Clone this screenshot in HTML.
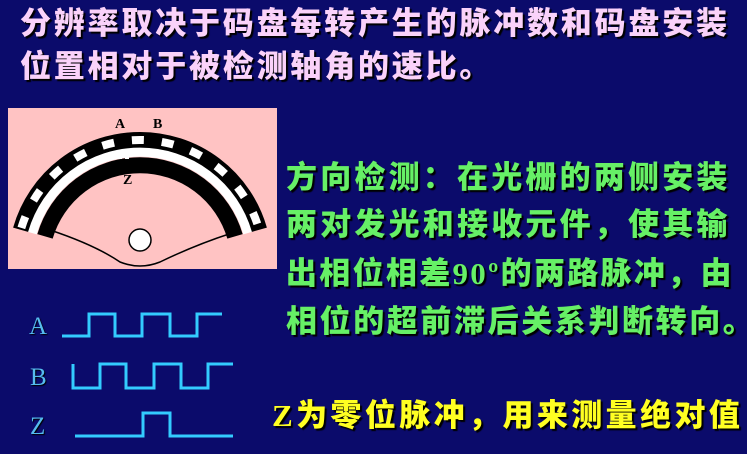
<!DOCTYPE html>
<html><head><meta charset="utf-8"><style>
html,body{margin:0;padding:0}
body{width:747px;height:454px;background:#0b0b6b;position:relative;overflow:hidden;font-family:"Liberation Sans","Noto Sans CJK SC",sans-serif}
.t{position:absolute;white-space:nowrap;font-weight:900;text-shadow:2px 2px 1px #000;line-height:1}
.ti{color:#fad2fa;font-size:31px;letter-spacing:2.8px;left:20px}
.g{color:#66f066;font-size:31px;letter-spacing:3.2px;left:286px}
.y{color:#ffff22;font-size:31px;letter-spacing:3.4px;left:272px}
.s{font-family:"Liberation Serif",serif;font-weight:bold}
.l{position:absolute;font-family:"Liberation Serif",serif;color:#55bbee;font-size:25px;line-height:1;text-shadow:1px 1px 1px #000}
</style></head><body>
<div class="t ti" style="top:8px">分辨率取决于码盘每转产生的脉冲数和码盘安装</div>
<div class="t ti" style="top:51px">位置相对于被检测轴角的速比。</div>

<svg style="position:absolute;left:0;top:0" width="747" height="454">
<rect x="8" y="108" width="269" height="161" fill="#ffc3c3"/>
<path d="M20.8,229.8 A124,124 0 0 1 259.2,229.8" fill="none" stroke="#000" stroke-width="16"/>
<path d="M20.8,229.8 A124,124 0 0 1 259.2,229.8" fill="none" stroke="#fff" stroke-width="8" stroke-dasharray="12 18" stroke-dashoffset="-2"/>
<path d="M32.4,233.1 A112,112 0 0 1 247.6,233.1" fill="none" stroke="#fff" stroke-width="9"/>
<path d="M45,236.4 A99,99 0 0 1 235,236.4" fill="none" stroke="#000" stroke-width="16"/>
<rect x="118" y="155" width="4" height="4" fill="#fff"/><rect x="125" y="155" width="4" height="4" fill="#fff"/>
<path d="M50,230 Q95,245 120,262 Q140,270 160,262 Q195,245 232,233" fill="none" stroke="#000" stroke-width="1.5"/>
<circle cx="140" cy="240" r="11" fill="#fff" stroke="#000" stroke-width="1.5"/>
<text x="115" y="128" font-family="Liberation Serif" font-weight="bold" font-size="14" fill="#000">A</text>
<text x="153" y="128" font-family="Liberation Serif" font-weight="bold" font-size="14" fill="#000">B</text>
<text x="123" y="184" font-family="Liberation Serif" font-weight="bold" font-size="14" fill="#000">Z</text>
<g fill="none" stroke="#33ccff" stroke-width="3">
<path d="M62,336 H89 V314 H115 V336 H142 V314 H170 V336 H197 V314 H222"/>
<path d="M73,364 V388 H100 V364 H126 V388 H154 V364 H181 V388 H208 V364 H233"/>
<path d="M75,436 H143 V413 H170 V436 H233"/>
</g>
</svg>
<div class="l" style="left:29px;top:314px">A</div>
<div class="l" style="left:30px;top:365px">B</div>
<div class="l" style="left:30px;top:414px">Z</div>

<div class="t g" style="top:162px">方向检测：在光栅的两侧安装</div>
<div class="t g" style="top:209px">两对发光和接收元件，使其输</div>
<div class="t g" style="top:258px;letter-spacing:2.3px">出相位相差<span class="s">90º</span>的两路脉冲，由</div>
<div class="t g" style="top:306px;letter-spacing:2.6px">相位的超前滞后关系判断转向。</div>
<div class="t y" style="top:400px"><span class="s">Z</span>为零位脉冲，用来测量绝对值</div>
</body></html>
